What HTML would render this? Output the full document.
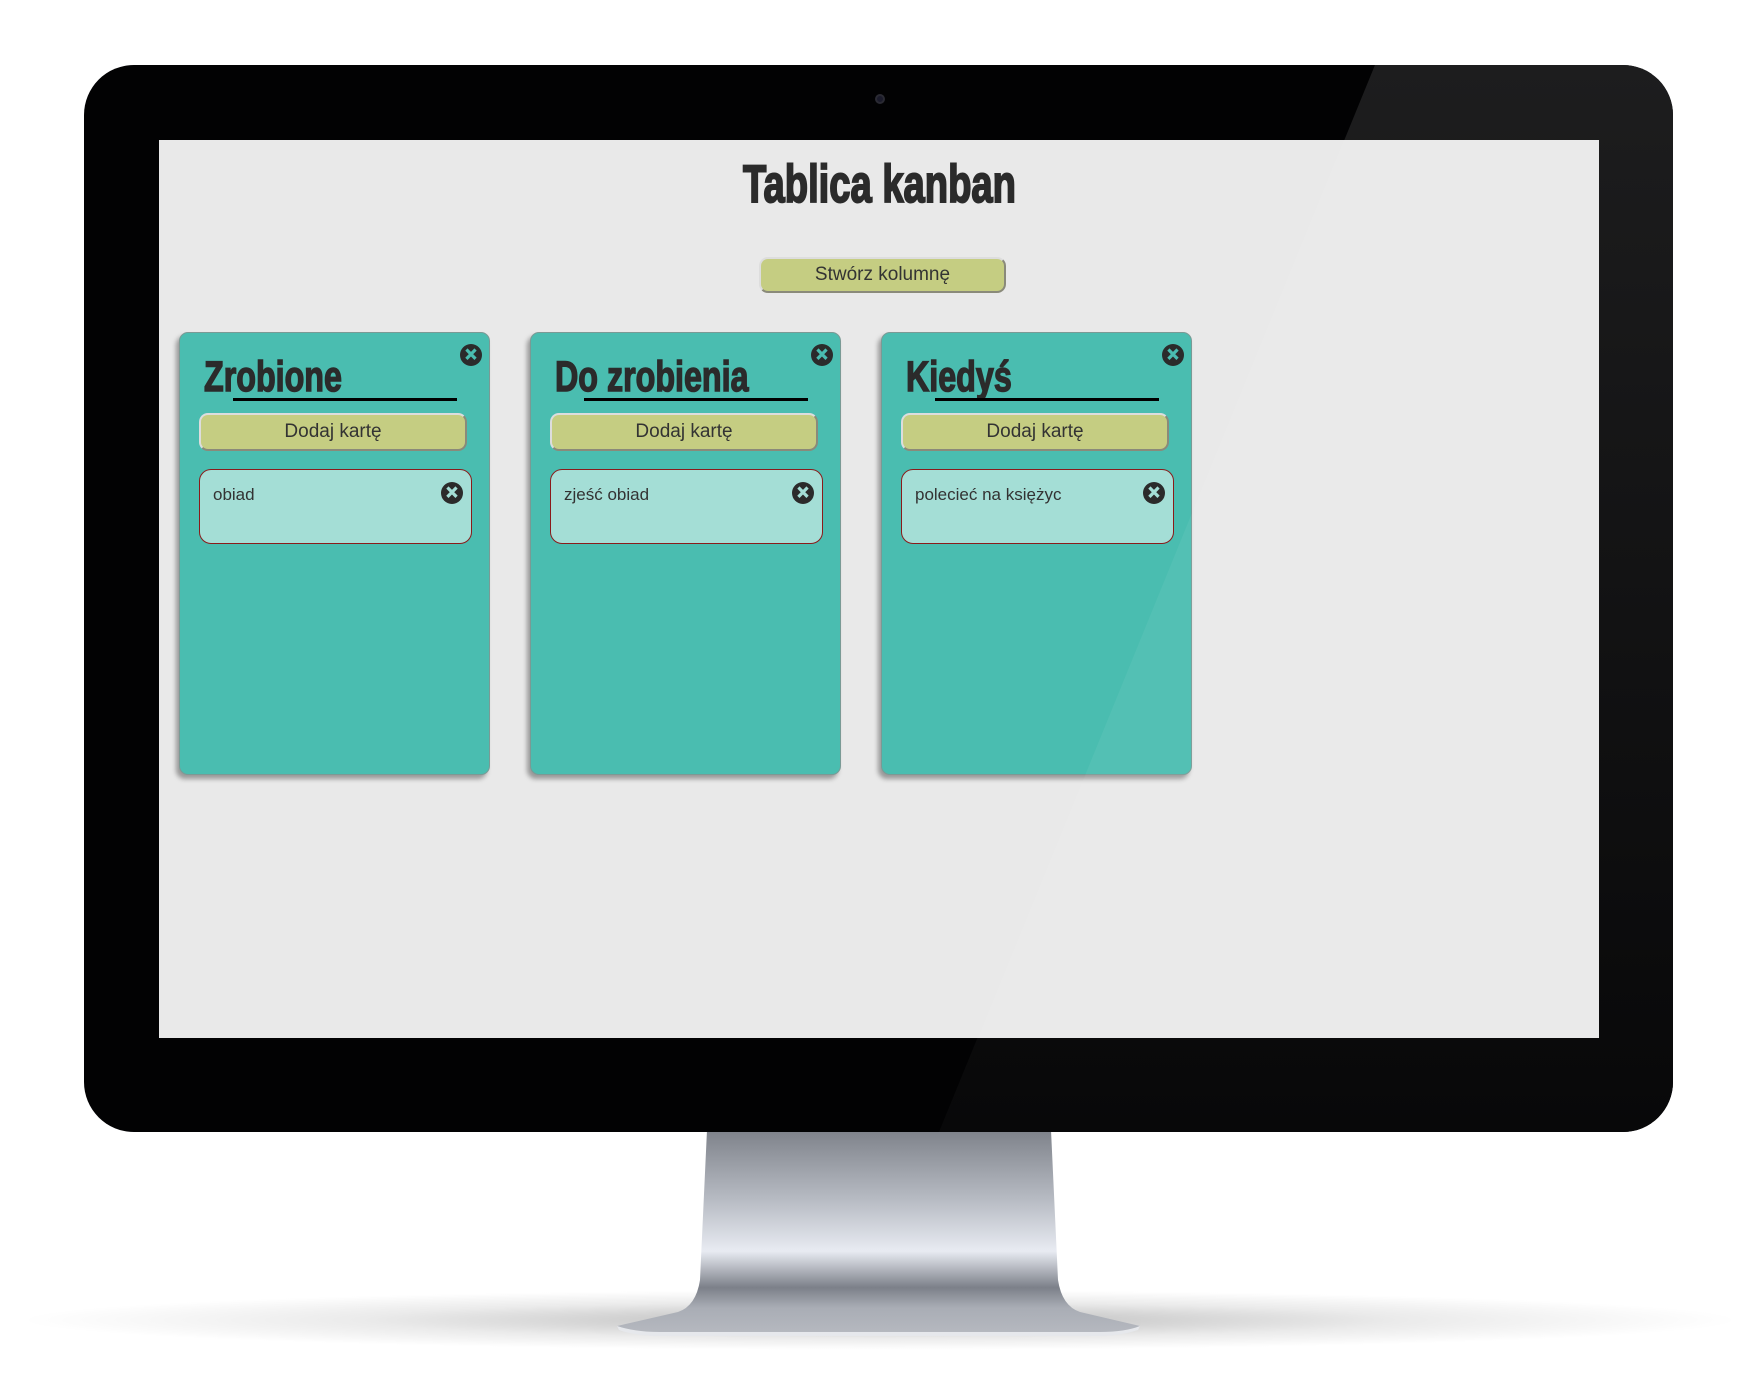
<!DOCTYPE html>
<html><head><meta charset="utf-8">
<style>
*{margin:0;padding:0;box-sizing:border-box}
body{width:1752px;height:1396px;background:#fff;position:relative;overflow:hidden;font-family:"Liberation Sans",sans-serif}
.abs{position:absolute}
#mon{left:84px;top:65px;width:1589px;height:1067px;background:#020203;border-radius:50px;overflow:hidden}
#screen{left:159px;top:140px;width:1440px;height:898px;background:#e9e9e9}
.title{position:absolute;left:0;width:1440px;top:14px;text-align:center}
.title span{display:inline-block;font-weight:bold;font-size:53px;color:#2b2b2b;transform:scaleX(0.72);-webkit-text-stroke:2px #2b2b2b}
.btn{position:absolute;background:#c5cd82;border-radius:9px;border-bottom:2px solid #8a8a7a;border-right:2px solid #8a8a7a;border-top:2px solid #ddd;border-left:2px solid #ddd;text-align:center;color:#333;font-size:19px}
.col{position:absolute;top:192px;width:311px;height:443px;background:#4abdb0;border-radius:9px;box-shadow:-3px 4px 5px rgba(0,0,0,.35);border:1px solid #7a9a95}
.ct{position:absolute;left:24px;top:20px;font-weight:bold;font-size:43px;color:#2b2b2b;transform:scaleX(0.75);transform-origin:left;white-space:nowrap;-webkit-text-stroke:1.5px #2b2b2b}
.ul{position:absolute;left:53px;top:65px;width:224px;height:3px;background:#000}
.x{position:absolute;width:22px;height:22px;border-radius:50%;background:#2b2b2b;color:#4abdb0;font-size:20px;line-height:22px;text-align:center;font-weight:bold;-webkit-text-stroke:1px currentColor}
.card{position:absolute;left:19px;top:136px;width:273px;height:75px;background:#a4ded6;border:1px solid #8b1a1a;border-radius:12px}
.card .t{position:absolute;left:13px;top:15px;font-size:17px;color:#333}
</style></head><body>
<svg class="abs" style="left:0;top:1250px" width="1752" height="146"><defs><radialGradient id="sh" cx="0.5" cy="0.5" r="0.5"><stop offset="0" stop-color="#000" stop-opacity=".28"/><stop offset=".6" stop-color="#000" stop-opacity=".08"/><stop offset="1" stop-color="#000" stop-opacity="0"/></radialGradient></defs>
<ellipse cx="880" cy="70" rx="860" ry="30" fill="url(#sh)"/></svg>
<svg class="abs" style="left:0;top:1130px" width="1752" height="220">
<defs><linearGradient id="neck" x1="0" y1="0" x2="0" y2="1"><stop offset="0" stop-color="#7e828a"/><stop offset=".35" stop-color="#b8bcc4"/><stop offset=".6" stop-color="#e8ebf2"/><stop offset=".78" stop-color="#7c8089"/><stop offset=".88" stop-color="#a9adb5"/><stop offset="1" stop-color="#b5b8bf"/></linearGradient></defs>
<path d="M707 0 L1051 0 L1058 150 Q1062 176 1080 182 L1140 196 Q1130 202 1110 202 L650 202 Q630 202 617 196 L678 182 Q696 176 700 150 Z" fill="url(#neck)"/>
<path d="M617 196 Q635 202 660 202 L1100 202 Q1125 202 1140 196 L1138 200 Q1120 206 1100 206 L660 206 Q635 206 619 200Z" fill="#e6e8ec"/>
</svg>
<div id="mon" class="abs">
<svg class="abs" style="left:0;top:0" width="1589" height="1067"><defs><linearGradient id="gl" x1="0" y1="0" x2="0" y2="1"><stop offset="0" stop-color="#1d1d1e"/><stop offset="1" stop-color="#080809"/></linearGradient></defs><polygon points="1291,0 1589,0 1589,1067 855,1067" fill="url(#gl)"/></svg>
<div class="abs" style="left:791px;top:29px;width:10px;height:10px;border-radius:50%;background:#1a1a2a;border:2px solid #2a2a33"></div>
</div>
<div id="screen" class="abs">
<div class="title"><span>Tablica kanban</span></div>
<div class="btn" style="left:600px;top:117px;width:247px;height:36px;line-height:31px">Stwórz kolumnę</div>

<div class="col" style="left:20px">
<div class="ct">Zrobione</div><div class="ul"></div><div class="x" style="left:280px;top:11px">×</div>
<div class="btn" style="left:19px;top:80px;width:268px;height:38px;line-height:33px">Dodaj kartę</div>
<div class="card"><div class="t">obiad</div><div class="x" style="left:241px;top:12px;color:#a4ded6">×</div></div>
</div>
<div class="col" style="left:371px">
<div class="ct">Do zrobienia</div><div class="ul"></div><div class="x" style="left:280px;top:11px">×</div>
<div class="btn" style="left:19px;top:80px;width:268px;height:38px;line-height:33px">Dodaj kartę</div>
<div class="card"><div class="t">zjeść obiad</div><div class="x" style="left:241px;top:12px;color:#a4ded6">×</div></div>
</div>
<div class="col" style="left:722px">
<div class="ct">Kiedyś</div><div class="ul"></div><div class="x" style="left:280px;top:11px">×</div>
<div class="btn" style="left:19px;top:80px;width:268px;height:38px;line-height:33px">Dodaj kartę</div>
<div class="card"><div class="t">polecieć na księżyc</div><div class="x" style="left:241px;top:12px;color:#a4ded6">×</div></div>
</div>
<svg class="abs" style="left:0;top:0;pointer-events:none" width="1440" height="898"><polygon points="1185,0 1440,0 1440,898 819,898" fill="#fff" opacity=".05"/></svg>
</div>
</body></html>
